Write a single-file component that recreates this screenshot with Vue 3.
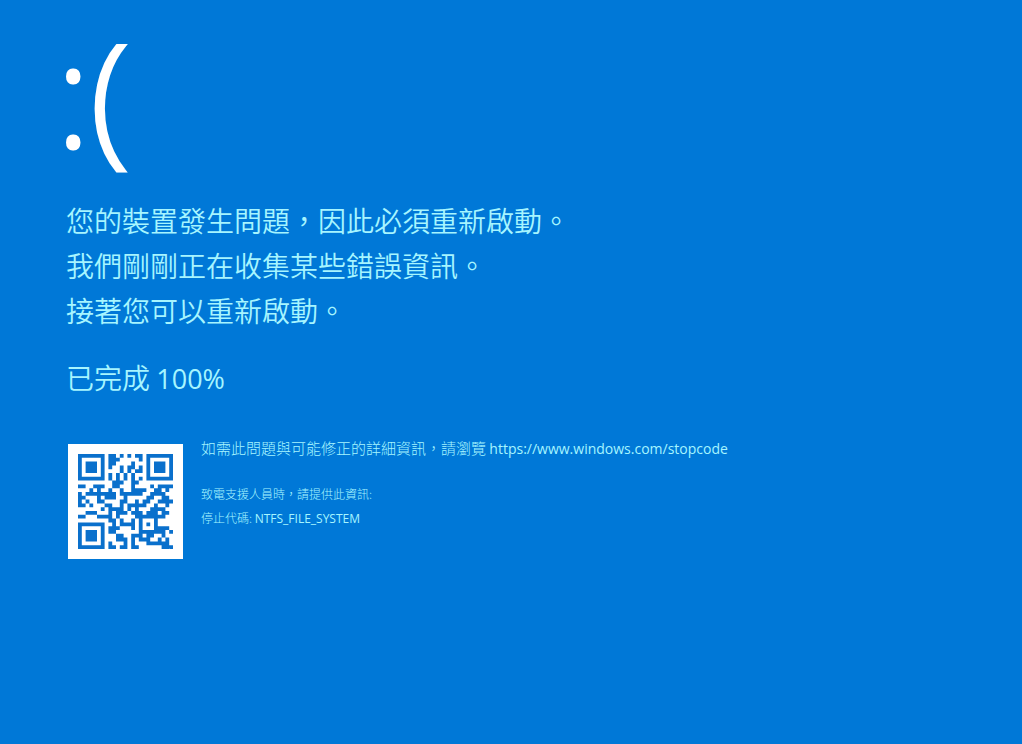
<script setup>
const stopUrl = 'https://www.windows.com/stopcode'
const stopCode = 'NTFS_FILE_SYSTEM'
const progress = 100

const SIZE = 25
const DATA_CODEWORDS = 34
const ECC_CODEWORDS = 10
const FORMAT_BITS = '110011000101111'

function gfMultiply(a, b) {
  let product = 0
  for (let i = 7; i >= 0; i--) {
    product = (product << 1) ^ ((product >> 7) * 0x11d)
    product ^= ((b >> i) & 1) * a
  }
  return product
}

function errorCorrection(data) {
  const divisor = new Array(ECC_CODEWORDS).fill(0)
  divisor[ECC_CODEWORDS - 1] = 1
  let root = 1
  for (let i = 0; i < ECC_CODEWORDS; i++) {
    for (let j = 0; j < ECC_CODEWORDS; j++) {
      divisor[j] = gfMultiply(divisor[j], root)
      if (j + 1 < ECC_CODEWORDS) divisor[j] ^= divisor[j + 1]
    }
    root = gfMultiply(root, 2)
  }
  const result = new Array(ECC_CODEWORDS).fill(0)
  for (const byte of data) {
    const factor = byte ^ result.shift()
    result.push(0)
    divisor.forEach((d, i) => { result[i] ^= gfMultiply(d, factor) })
  }
  return result
}

// Version 2, level L, byte mode, mask 4.
function encode(text) {
  const bin = (n, width) => n.toString(2).padStart(width, '0')
  let bits = '0100' + bin(text.length, 8)
  for (const ch of text) bits += bin(ch.charCodeAt(0), 8)
  bits += '0000'
  bits = bits.padEnd(Math.ceil(bits.length / 8) * 8, '0')
  const data = bits.match(/.{8}/g).map((b) => parseInt(b, 2))
  for (let pad = 0xec; data.length < DATA_CODEWORDS; pad ^= 0xfd) data.push(pad)
  const stream = [...data, ...errorCorrection(data)].map((b) => bin(b, 8)).join('')

  const grid = Array.from({ length: SIZE }, () => new Array(SIZE).fill(null))
  const ring = (row, col, radius, light) => {
    for (let dr = -radius; dr <= radius; dr++) {
      for (let dc = -radius; dc <= radius; dc++) {
        const r = row + dr
        const c = col + dc
        if (r < 0 || c < 0 || r >= SIZE || c >= SIZE) continue
        grid[r][c] = light.includes(Math.max(Math.abs(dr), Math.abs(dc))) ? 0 : 1
      }
    }
  }
  for (let i = 0; i < SIZE; i++) grid[6][i] = grid[i][6] = (i + 1) % 2
  ring(3, 3, 4, [2, 4])
  ring(3, SIZE - 4, 4, [2, 4])
  ring(SIZE - 4, 3, 4, [2, 4])
  ring(18, 18, 2, [1])

  const f = [...FORMAT_BITS].map(Number)
  const near = [0, 1, 2, 3, 4, 5, 7, 8]
  near.forEach((c, i) => { grid[8][c] = f[i] })
  ;[7, 5, 4, 3, 2, 1, 0].forEach((r, i) => { grid[r][8] = f[8 + i] })
  for (let i = 0; i < 7; i++) grid[SIZE - 1 - i][8] = f[i]
  for (let i = 0; i < 8; i++) grid[8][SIZE - 8 + i] = f[7 + i]
  grid[SIZE - 8][8] = 1

  let k = 0
  let upward = true
  for (let right = SIZE - 1; right >= 1; right -= 2) {
    if (right === 6) right = 5
    for (let v = 0; v < SIZE; v++) {
      const r = upward ? SIZE - 1 - v : v
      for (const c of [right, right - 1]) {
        if (grid[r][c] !== null) continue
        const bit = k < stream.length ? Number(stream[k]) : 0
        k++
        const flip = (Math.floor(r / 2) + Math.floor(c / 3)) % 2 === 0
        grid[r][c] = flip ? bit ^ 1 : bit
      }
    }
    upward = !upward
  }
  return grid
}

const qrPath = encode(stopUrl)
  .flatMap((row, r) => row.map((dark, c) => (dark ? `M${c} ${r}h1v1h-1z` : '')))
  .join('')
</script>

<template>
  <main class="screen">
    <div class="face">:(</div>
    <h1 class="message">
      <span>您的裝置發生問題，因此必須重新啟動。</span>
      <span>我們剛剛正在收集某些錯誤資訊。</span>
      <span>接著您可以重新啟動。</span>
    </h1>
    <p class="progress">已完成 <span class="latin">{{ progress }}%</span></p>
    <section class="details">
      <div class="qr">
        <svg viewBox="0 0 25 25" role="img" aria-label="QR code">
          <path :d="qrPath" fill="#0a70cc" />
        </svg>
      </div>
      <div class="info">
        <p class="more">如需此問題與可能修正的詳細資訊，請瀏覽 <a class="latin" :href="stopUrl">{{ stopUrl }}</a></p>
        <p class="support">致電支援人員時，請提供此資訊:</p>
        <p class="support">停止代碼: <span class="latin">{{ stopCode }}</span></p>
      </div>
    </section>
  </main>
</template>

<style>
body {
  margin: 0;
  background: #0078d7;
}
</style>

<style scoped>
.screen {
  box-sizing: border-box;
  min-height: 100vh;
  padding: 18px 56px;
  background: #0078d7;
  color: #a6f5ff;
  font-family: "Noto Sans CJK TC", sans-serif;
  font-weight: 350;
}
.latin {
  font-family: "Open Sans", sans-serif;
  font-weight: 400;
}
.face {
  color: #fff;
  font-family: "Open Sans", sans-serif;
  font-size: 144px;
  font-weight: 300;
  line-height: 148px;
  -webkit-text-stroke: 3px #fff;
}
.message {
  display: flex;
  flex-direction: column;
  margin: 32px 0 0;
  padding-left: 10px;
  font-size: 28px;
  font-weight: 350;
  line-height: 45px;
}
.progress {
  margin: 22px 0 0;
  padding-left: 10px;
  font-size: 28px;
  line-height: 44px;
}
.progress .latin {
  font-size: 27px;
}
.details {
  display: flex;
  gap: 18px;
  margin-top: 37px;
  padding-left: 12px;
}
.qr {
  flex: none;
  box-sizing: border-box;
  width: 115px;
  height: 115px;
  margin-top: 6px;
  padding: 10px;
  background: #fff;
}
.qr svg {
  display: block;
  width: 100%;
  height: 100%;
}
.info p {
  margin: 0;
}
.info .more {
  margin-bottom: 23px;
  font-size: 15px;
  font-weight: 300;
  line-height: 20px;
}
.more .latin {
  font-size: 14px;
}
.info .support {
  font-size: 12px;
  font-weight: 300;
  line-height: 24px;
}
a {
  color: inherit;
  text-decoration: none;
}
</style>
